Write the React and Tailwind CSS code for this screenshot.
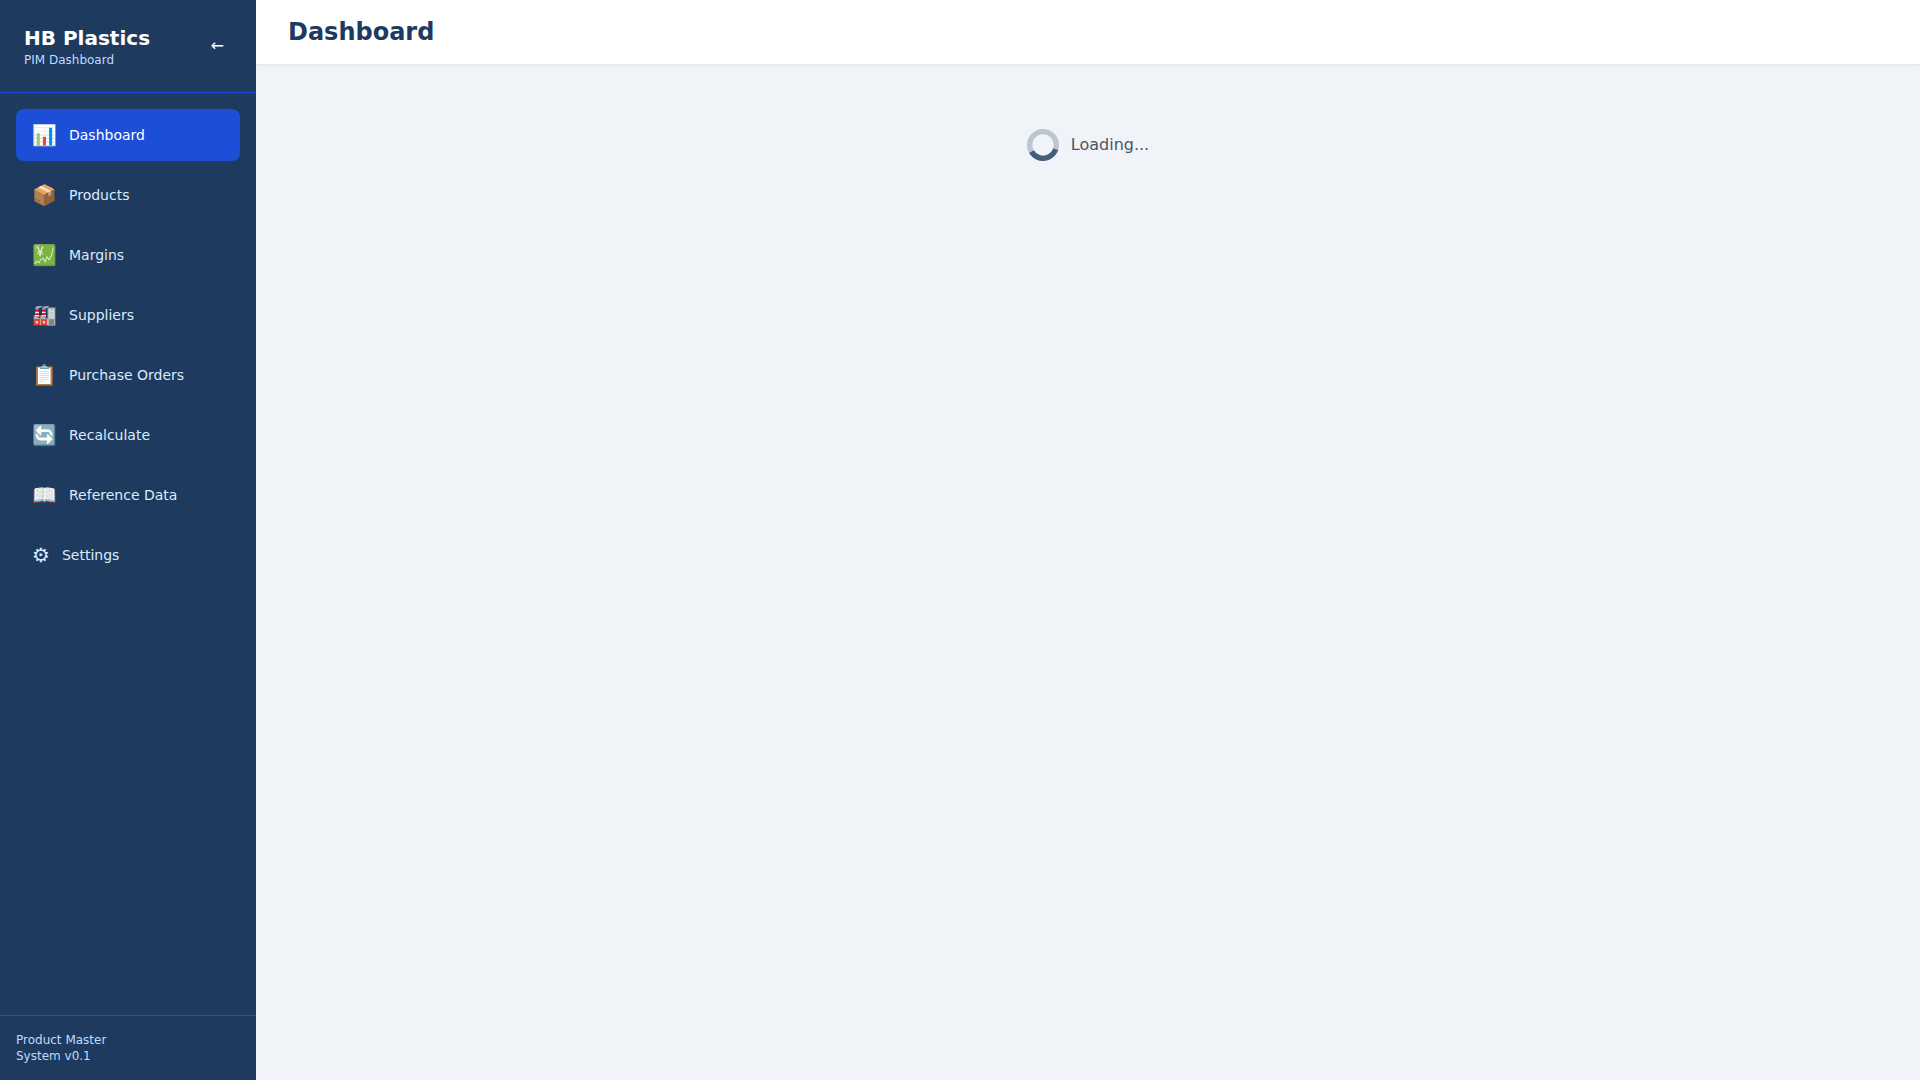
const items = [
  ["📊", "Dashboard"],
  ["📦", "Products"],
  ["💹", "Margins"],
  ["🏭", "Suppliers"],
  ["📋", "Purchase Orders"],
  ["🔄", "Recalculate"],
  ["📖", "Reference Data"],
  ["⚙", "Settings"],
];

function Sidebar() {
  return (
    <aside className="flex w-64 shrink-0 flex-col bg-[#1e3a5f] text-white">
      <div className="flex items-center justify-between border-b border-[#1d4ed8] p-6">
        <div>
          <h1 className="text-xl font-bold">HB Plastics</h1>
          <p className="text-xs text-[#bfdbfe]">PIM Dashboard</p>
        </div>
        <button type="button" aria-label="Collapse sidebar" className="rounded p-2">←</button>
      </div>
      <nav className="flex-1 space-y-2 p-4">
        {items.map(([icon, label], i) => (
          <a
            key={label}
            href="#"
            className={
              i === 0
                ? "flex items-center gap-3 rounded-lg bg-[#1d4ed8] px-4 py-3 text-white"
                : "flex items-center gap-3 rounded-lg px-4 py-3 text-[#dbeafe]"
            }
          >
            <span className="text-xl">{icon}</span>
            <span className="text-sm">{label}</span>
          </a>
        ))}
      </nav>
      <div className="border-t border-[#1d4ed8] p-4 text-xs text-[#bfdbfe]">
        <p>Product Master</p>
        <p>System v0.1</p>
      </div>
    </aside>
  );
}

function Spinner() {
  return (
    <svg className="size-8 text-[#1e3a5f]" viewBox="0 0 24 24" fill="none" aria-hidden="true">
      <circle className="opacity-25" cx="12" cy="12" r="10" stroke="currentColor" strokeWidth="4" />
      <path
        className="opacity-75"
        fill="currentColor"
        transform="rotate(-120 12 12)"
        d="M4 12a8 8 0 018-8V0C5.373 0 0 5.373 0 12h4zm2 5.291A7.962 7.962 0 014 12H0c0 3.042 1.135 5.824 3 7.938l3-2.647z"
      />
    </svg>
  );
}

export default function App() {
  return (
    <div className="flex min-h-screen bg-[#f0f4f8] font-['DejaVu_Sans',sans-serif]">
      <Sidebar />
      <div className="flex flex-1 flex-col">
        <header className="border-b border-[#e5e7eb] bg-white px-8 py-4 shadow-xs">
          <h2 className="text-2xl font-bold text-[#1e3a5f]">Dashboard</h2>
        </header>
        <main className="flex-1 p-8">
          <div className="flex items-center justify-center gap-3 py-8" role="status">
            <Spinner />
            <span className="text-[#4b5563]">Loading...</span>
          </div>
        </main>
      </div>
    </div>
  );
}
